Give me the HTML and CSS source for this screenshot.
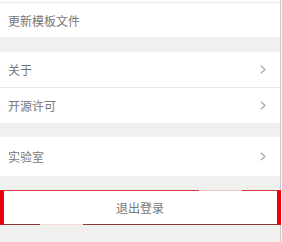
FILE: index.html
```html
<!DOCTYPE html>
<html lang="zh">
<head>
<meta charset="utf-8">
<link rel="stylesheet" href="styles.css">
</head>
<body>
<div class="page">
  <div class="group first">
    <div class="row r34">更新模板文件</div>
  </div>
  <div class="gap g15"></div>
  <div class="group">
    <div class="row r35 sep">关于<span class="chev"><svg width="6" height="9" viewBox="0 0 6 9"><path d="M0.8 0.8 L5 4.5 L0.8 8.2" fill="none" stroke="#a9a9a9" stroke-width="1.2"/></svg></span></div>
    <div class="row r35">开源许可<span class="chev"><svg width="6" height="9" viewBox="0 0 6 9"><path d="M0.8 0.8 L5 4.5 L0.8 8.2" fill="none" stroke="#a9a9a9" stroke-width="1.2"/></svg></span></div>
  </div>
  <div class="gap g14"></div>
  <div class="group">
    <div class="row r39">实验室<span class="chev"><svg width="6" height="9" viewBox="0 0 6 9"><path d="M0.8 0.8 L5 4.5 L0.8 8.2" fill="none" stroke="#a9a9a9" stroke-width="1.2"/></svg></span></div>
  </div>
  <div class="gap g14"></div>
  <div class="group logout">
    <div class="row r35 center">退出登录</div>
    <div class="annot"><span class="gap-top"></span><span class="gap-bottom"></span></div>
  </div>
  <div class="rest"></div>
</div>
</body>
</html>
```
FILE: styles.css
```css
html, body {
  margin: 0;
  padding: 0;
  background: #fbfbfb;
}
body {
  width: 282px;
  height: 242px;
  overflow: hidden;
  font-family: "Noto Sans CJK SC", "Noto Sans", sans-serif;
}
.page {
  width: 280px;
  height: 242px;
  background: #f0f0ee;
  border-right: 1px solid #c8c8c8;
  display: flex;
  flex-direction: column;
}
.group {
  background: #fff;
}
.group.first {
  border-top: 1px solid #ececec;
  margin-top: 2px;
  box-shadow: 0 -2px 0 #fff;
}
.row {
  display: flex;
  align-items: center;
  justify-content: space-between;
  padding: 0 14px 0 8px;
  font-size: 12px;
  color: #777;
  box-sizing: border-box;
}
.row.center {
  justify-content: center;
  padding: 0;
}
.r34 { height: 34px; }
.r35 { height: 35px; }
.r39 { height: 39px; }
.sep { border-bottom: 1px solid #e6e6e6; height: 36px; }
.gap { flex: none; }
.g15 { height: 15px; }
.g14 { height: 14px; }
.chev {
  display: flex;
  align-items: center;
}
.logout {
  position: relative;
}
.annot {
  position: absolute;
  left: 0;
  right: -1px;
  top: 0;
  bottom: 0;
  border-left: 4px solid #e8000b;
  border-right: 4px solid #e8000b;
  border-top: 1px solid #d63a3a;
  border-bottom: 1px solid #8c3b3b;
  pointer-events: none;
}
.gap-top {
  position: absolute;
  top: -1px;
  left: 195px;
  width: 43px;
  height: 1px;
  background: #f1c9c9;
}
.gap-bottom {
  position: absolute;
  bottom: -1px;
  left: 36px;
  width: 43px;
  height: 1px;
  background: #f4dede;
}
.rest {
  flex: 1;
}
```
